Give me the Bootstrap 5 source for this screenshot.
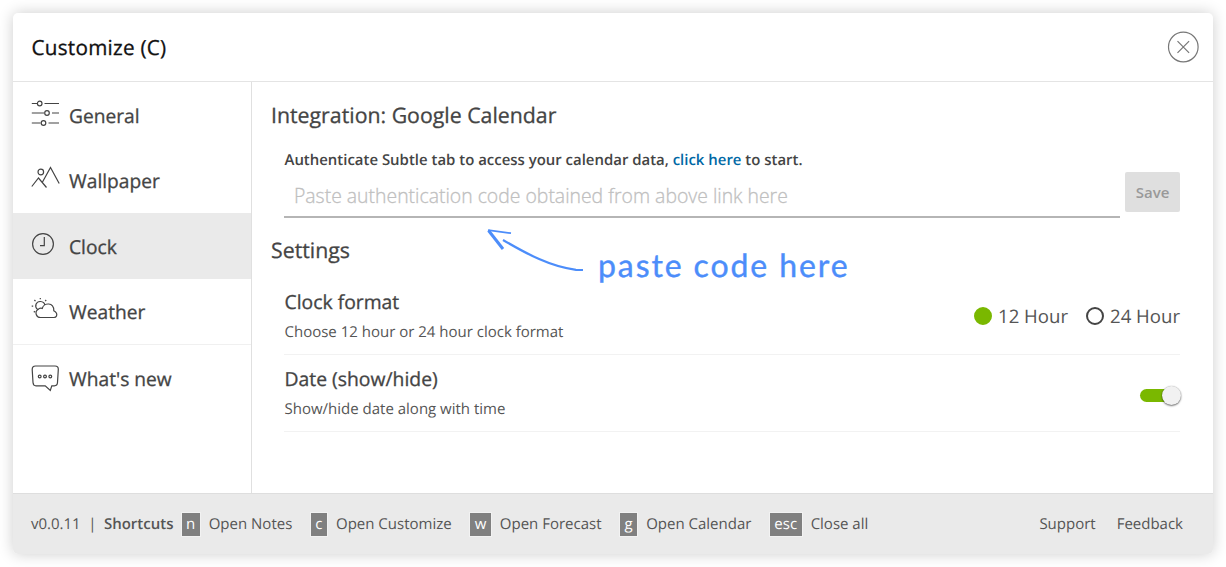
<!DOCTYPE html>
<html lang="en">
<head>
<meta charset="utf-8">
<meta name="viewport" content="width=device-width, initial-scale=1">
<title>Customize (C)</title>
<link href="https://cdn.jsdelivr.net/npm/bootstrap@5.3.0/dist/css/bootstrap.min.css" rel="stylesheet">
<style>
html{overflow:hidden}
body{font-family:"Open Sans",sans-serif;color:#444;background:#fff;min-height:100vh;padding:13px 0 0 13px;text-rendering:geometricPrecision}
.panel{width:1200px;height:541px;border-radius:5px;box-shadow:0 0 15px rgba(0,0,0,.2);overflow:hidden}
.panel-head{height:69px;border-bottom:1px solid #e4e4e4;padding:0 14px 0 18.5px}
.panel-title,.side-item,.sect,.setting-name{-webkit-text-stroke:.3px currentColor}
.panel-title{font-size:20.7px;font-weight:400;color:#111;line-height:28px;letter-spacing:.25px;padding-top:1px}
.side{width:239px;border-right:1px solid #e0e0e0}
.side-item{height:65.5px;padding:1px 0 0 18px;font-size:19.2px;color:#444;text-decoration:none}
.side-item:hover{color:#444}
.side-item span{padding-top:2px}
.side-item svg{width:30px;height:30px;margin-right:8px;margin-top:-5px;fill:none;stroke:#444;stroke-width:1.2;overflow:visible}
.side-item.current{background:#eaeaea}
.side-item.last{border-top:1px solid #f0f0f0;height:68px}
.side-item.last span{padding-top:0}
.content{padding:19px 33px 0 19px}
.sect{font-size:21.3px;font-weight:400;line-height:30px}
.inner{margin-left:13px}
.auth{font-size:14.95px;font-weight:600;line-height:20px;margin-top:19px;padding-left:.5px}
.auth a{color:#0068a5;text-decoration:none}
.code-input{border:0;border-bottom:2px solid #b5b5b5;border-radius:0;height:48px;padding:5px 10px 0;font-size:19.4px;font-weight:300;width:836px;background:none;-webkit-text-stroke:.3px #c0c0c0}
.code-input::placeholder{color:#c0c0c0;opacity:1}
.btn-save{width:55px;height:40px;margin-top:2px;background:#dfdfdf;color:#999;font-size:15px;font-weight:600;border-radius:2px;border:0;padding:0}
.settings-title{margin-top:18px}
.settings-list{margin-top:12px}
.setting{height:77px;border-bottom:1px solid #f2f2f2}
.setting-text{padding:10px 0 0 .5px}
.setting-name{font-size:19.35px;line-height:28px}
.setting-desc{font-size:15px;line-height:20px;color:#555;margin-top:6px}
.choice{font-size:18.6px;color:#555;line-height:28px}
.choice span:not(.dot){padding-top:2px}
.dot{width:18px;height:18px;border-radius:50%;border:2.4px solid #444;margin-right:6px}
.dot.on{background:#7ab800;border-color:#7ab800}
.choice-next{margin-left:18px}
.track{width:40px;height:13px;border-radius:7px;background:#7ab800;position:relative;margin-top:4px}
.knob{position:absolute;right:-1px;top:-3px;width:19px;height:19px;border-radius:50%;background:#f1f1f1;box-shadow:0 1px 2px rgba(0,0,0,.55),0 0 1px rgba(0,0,0,.3)}
.foot{height:61px;background:#eaeaea;border-top:1px solid #dedede;padding:1px 30px 0 18px;font-size:15px;color:#555;white-space:nowrap}
.key{background:#808080;color:#fff;height:23px;line-height:23px;padding:0 4.5px;outline:1px solid #f2f2f2;margin:0 9px 0 18.5px}
.key.first{margin-left:8px}
.bar{margin:0 7.5px}
.feedback{margin-left:21px}
.hint{position:absolute;left:487px;top:228px;color:#4c8dfa;pointer-events:none}
.hint-text{position:absolute;left:111px;top:17px;font-family:Lato,sans-serif;font-size:32px;line-height:40px;white-space:nowrap;letter-spacing:1.9px;-webkit-text-stroke:.4px currentColor}
</style>
</head>
<body>
<main class="panel d-flex flex-column">
  <header class="panel-head d-flex align-items-center justify-content-between">
    <h1 class="panel-title m-0">Customize (C)</h1>
    <svg width="32" height="32" viewBox="0 0 32 32" fill="none" stroke="#777" stroke-width="1.2"><circle cx="16.3" cy="16" r="14.8"/><path d="M10.5 10.2 22.1 21.8M22.1 10.2 10.5 21.8"/></svg>
  </header>
  <div class="d-flex flex-grow-1">
    <nav class="side">
      <a href="#" class="side-item d-flex align-items-center"><svg viewBox="0 0 30 30"><path d="M.8 5.5H6M13.5 5.5H28M.8 15H13M21 15H28M.8 25H9.5M17.5 25H28"/><circle cx="8.7" cy="5.5" r="2.3"/><circle cx="16" cy="15" r="2.3"/><circle cx="12.5" cy="25" r="2.3"/></svg><span>General</span></a>
      <a href="#" class="side-item d-flex align-items-center"><svg viewBox="0 0 30 30"><path d="M.8 23.5 7.5 15 15.5 24.5M11.5 19 19.5 4.5 28.2 20.5"/><circle cx="9.8" cy="9" r="2.8"/></svg><span>Wallpaper</span></a>
      <a href="#" class="side-item current d-flex align-items-center"><svg viewBox="0 0 30 30"><circle cx="12" cy="15" r="10.4"/><path d="M13.3 8V16.7H9"/></svg><span>Clock</span></a>
      <a href="#" class="side-item d-flex align-items-center"><svg viewBox="0 0 30 30"><path d="M9.5 23.5A4.3 4.3 0 0 1 7 15.6C8.3 13.8 10.3 14 11.3 14.4 12.5 8.5 23.5 7.8 22.8 16.8 25 18 26.3 20 25.5 22 25 23.2 24.3 23.5 23 23.5ZM6.5 15.5C2.8 12 5.5 7.2 9.5 7.5 12 7.7 13.7 9.5 13.9 11.2M9.3 4V5.3M3.4 6 4.5 7.2M15.2 6 14.2 7.2M.7 12.2H2.2M2.8 18.2 4 17.2"/></svg><span>Weather</span></a>
      <a href="#" class="side-item last d-flex align-items-center"><svg viewBox="0 0 30 30"><path d="M4.5 4H24Q27.5 4 27.3 7.5L26.5 20.5Q26.3 23.8 23.3 23.8H20.8L19.3 28.4 14.2 23.8H5Q2.3 23.8 2 20.5L1.2 7.5Q1.2 4 4.5 4Z"/><circle cx="8.7" cy="14.5" r="1.4"/><circle cx="14" cy="14.5" r="1.4"/><circle cx="19.3" cy="14.5" r="1.4"/></svg><span>What's new</span></a>
    </nav>
    <section class="content flex-grow-1">
      <h2 class="sect m-0">Integration: Google Calendar</h2>
      <div class="inner">
        <div class="auth">Authenticate Subtle tab to access your calendar data, <a href="#">click here</a> to start.</div>
        <div class="d-flex justify-content-between align-items-start">
          <input class="code-input" placeholder="Paste authentication code obtained from above link here">
          <button class="btn btn-save">Save</button>
        </div>
      </div>
      <h2 class="sect settings-title mb-0">Settings</h2>
      <div class="inner settings-list">
        <div class="setting d-flex justify-content-between">
          <div class="setting-text"><div class="setting-name">Clock format</div><div class="setting-desc">Choose 12 hour or 24 hour clock format</div></div>
          <div class="choice d-flex align-items-center"><span class="dot on"></span><span>12 Hour</span><span class="dot choice-next"></span><span>24 Hour</span></div>
        </div>
        <div class="setting d-flex justify-content-between align-items-center">
          <div class="setting-text align-self-start"><div class="setting-name">Date (show/hide)</div><div class="setting-desc">Show/hide date along with time</div></div>
          <div class="track"><span class="knob"></span></div>
        </div>
      </div>
    </section>
  </div>
  <footer class="foot d-flex align-items-center">
    <span>v0.0.11</span><span class="bar">|</span><span class="fw-semibold">Shortcuts</span>
    <span class="key first">n</span><span>Open Notes</span>
    <span class="key">c</span><span>Open Customize</span>
    <span class="key">w</span><span>Open Forecast</span>
    <span class="key">g</span><span>Open Calendar</span>
    <span class="key">esc</span><span>Close all</span>
    <span class="ms-auto">Support</span><span class="feedback">Feedback</span>
  </footer>
</main>
<div class="hint">
  <svg width="100" height="46" viewBox="0 0 100 46" fill="none" stroke="currentColor"><path d="M1 2.2 24 5.2" stroke-width="1.8"/><path d="M1.5 2.5 16 21" stroke-width="3"/><path d="M16 12C40 26 64 39 89 41.8L96 42" stroke-width="2.2"/></svg>
  <span class="hint-text">paste code here</span>
</div>
<script src="https://cdn.jsdelivr.net/npm/bootstrap@5.3.0/dist/js/bootstrap.bundle.min.js"></script>
</body>
</html>
